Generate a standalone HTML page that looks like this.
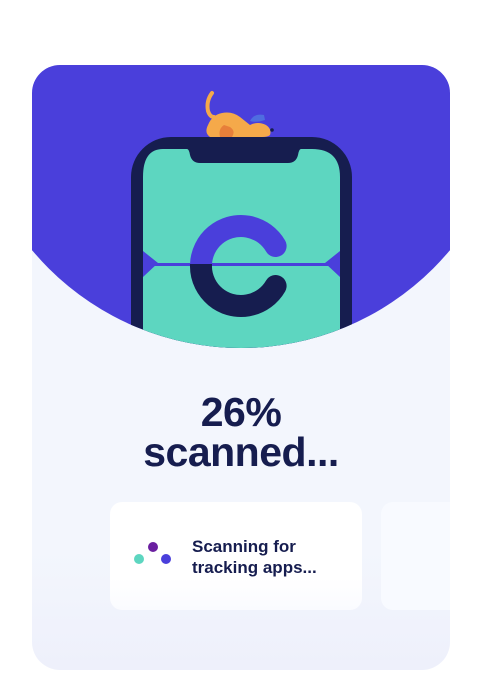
<html><head><style>
body{margin:0;background:#fff;width:480px;height:680px;overflow:hidden;font-family:"Liberation Sans",sans-serif;position:relative}
.card{position:absolute;left:32px;top:65px;width:418px;height:605px;border-radius:28px;background:linear-gradient(#f3f6fd 80%,#eef0fb);overflow:hidden}
.t{position:absolute;left:0;width:418px;text-align:center;color:#161d4f;font-weight:bold;font-size:41px;letter-spacing:-0.5px}
.c1{position:absolute;left:78px;top:437px;width:252px;height:108px;border-radius:12px;background:linear-gradient(#fff 70%,#fafbff)}
.c2{position:absolute;left:349px;top:437px;width:90px;height:108px;border-radius:12px;background:#f8faff}
.d{position:absolute;width:10px;height:10px;border-radius:50%}
.tx{position:absolute;left:82px;top:34px;color:#161d4f;font-size:17px;font-weight:bold;line-height:21px}
</style></head><body>
<div class="card">
<svg width="418" height="300" style="position:absolute;left:0;top:0">
<defs>
<clipPath id="cp"><circle cx="209" cy="11" r="272"/></clipPath>
<clipPath id="top"><rect x="0" y="0" width="418" height="199"/></clipPath>
<clipPath id="bot"><rect x="0" y="199" width="418" height="100"/></clipPath>
</defs>
<g clip-path="url(#cp)">
<rect width="418" height="300" fill="#4a3fdb"/>
<rect x="99" y="72" width="221" height="260" rx="40" fill="#161d4f"/>
<path d="M131 84 H155 Q157 84 158 90 Q160 98 168 98 H256 Q264 98 266 90 Q267 84 269 84 H280 Q308 84 308 112 V300 H111 V112 Q111 84 131 84Z" fill="#5dd6c0"/>
<path d="M111 186 L126 198 L111 212Z M308 186 L293 198 L308 212Z" fill="#4a3fdb"/>
<rect x="111" y="198" width="197" height="3" fill="#4a3fdb"/>
<path d="M243.6 181 A40 40 0 1 0 243.6 221" fill="none" stroke="#4a3fdb" stroke-width="22" stroke-linecap="round" clip-path="url(#top)"/>
<path d="M243.6 181 A40 40 0 1 0 243.6 221" fill="none" stroke="#161d4f" stroke-width="22" stroke-linecap="round" clip-path="url(#bot)"/>
<!-- dog -->
<path d="M180 28 Q174 36 176 46 Q178 52 182 52" fill="none" stroke="#f5a94a" stroke-width="4" stroke-linecap="round"/>
<path d="M178 72 Q172 68 176 60 Q180 50 190 48 Q200 46 208 52 L218 60 Q226 56 234 60 Q240 64 238 70 Q236 72 230 72Z" fill="#f5a94a"/>
<path d="M198 62 Q204 66 200 72 L188 72 Q186 64 192 60Z" fill="#e77f3a"/>
<path d="M218 56 Q222 48 232 50 L233 55 Q224 58 218 56Z" fill="#4f6de0"/>
<circle cx="240" cy="65" r="1.8" fill="#161d4f"/>
</g>
</svg>
<div class="t" style="top:324px">26%</div>
<div class="t" style="top:364px">scanned...</div>
<div class="c1">
<div class="d" style="left:24px;top:52px;background:#5dd6c0"></div>
<div class="d" style="left:38px;top:40px;background:#6a1fa0"></div>
<div class="d" style="left:51px;top:52px;background:#4a3fdb"></div>
<div class="tx">Scanning for<br>tracking apps...</div>
</div>
<div class="c2"></div>
</div>
</body></html>
